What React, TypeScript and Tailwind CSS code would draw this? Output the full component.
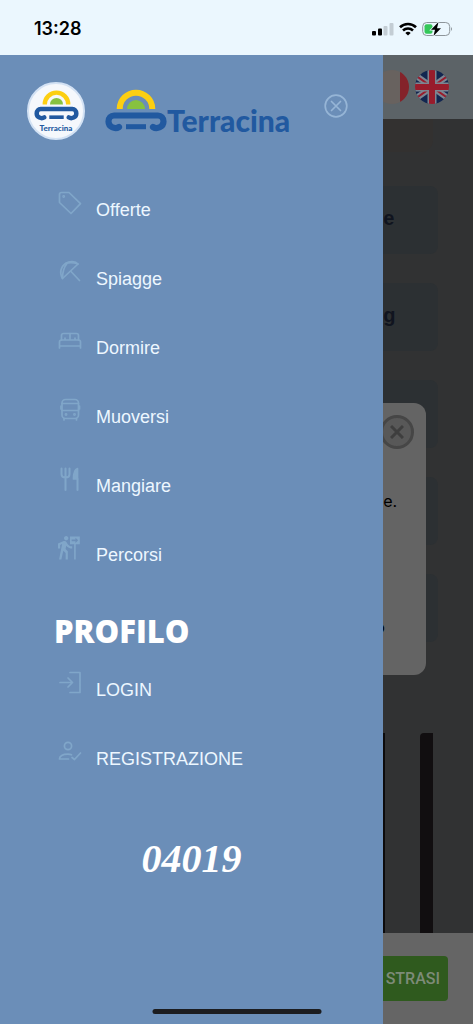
import type { ReactNode } from 'react';
import { MdFollowTheSigns } from 'react-icons/md';

const menu = [
  { label: 'Offerte', icon: <TagIcon /> },
  { label: 'Spiagge', icon: <BeachIcon /> },
  { label: 'Dormire', icon: <BedIcon /> },
  { label: 'Muoversi', icon: <BusIcon /> },
  { label: 'Mangiare', icon: <CutleryIcon /> },
  { label: 'Percorsi', icon: <MdFollowTheSigns viewBox="3 1.5 20 22" className="size-6" /> },
];

const profile = [
  { label: 'LOGIN', icon: <LoginIcon /> },
  { label: 'REGISTRAZIONE', icon: <UserCheckIcon /> },
];

const cards = ['e', 'g', '', '', ''];

function LineIcon({ children }: { children: ReactNode }) {
  return (
    <svg
      viewBox="0 0 24 24"
      className="size-6"
      fill="none"
      stroke="currentColor"
      strokeWidth="1.7"
      strokeLinecap="round"
      strokeLinejoin="round"
    >
      {children}
    </svg>
  );
}

function TagIcon() {
  return (
    <LineIcon>
      <path d="M1.5 3.5Q1.5 1.5 3.5 1.5H11L22.5 12.7 13 22.5 1.5 11.5Z" />
      <circle cx="5.7" cy="5.5" r="0.6" />
    </LineIcon>
  );
}

function BeachIcon() {
  return (
    <LineIcon>
      <path d="M4.500 18.500C1 13 3 6.500 7.500 3.500 12 .5 17.500 1.200 20 4Z" />
      <path d="M4.500 18.500C4.500 12 6.500 6.500 9 3.500M20 4C15.500 2.500 11 2.500 7.500 3.500M13 11.500 21.500 20.500" />
    </LineIcon>
  );
}

function BedIcon() {
  return (
    <LineIcon>
      <path d="M3.500 11V6.500Q3.500 4.500 5.500 4.500H18.500Q20.500 4.500 20.500 6.500V11" />
      <path d="M1.500 19V13Q1.500 11 3.500 11H20.500Q22.500 11 22.500 13V19M1.500 17H22.500M12 4.500V9.500M7 10V9M17 10V9" />
    </LineIcon>
  );
}

function BusIcon() {
  return (
    <LineIcon>
      <rect x="4" y="1.500" width="16.500" height="19" rx="3.500" />
      <path d="M4 5.500H20.500M4 12.500H20.500M6 20.500V22M18.500 20.500V22M3 8V11M21.500 8V11" />
      <circle cx="8" cy="16.500" r="0.600" />
      <circle cx="16.500" cy="16.500" r="0.600" />
    </LineIcon>
  );
}

function CutleryIcon() {
  return (
    <LineIcon>
      <path d="M3.500 1.500V7Q3.500 10.500 7.500 10.500 11.500 10.500 11.500 7V1.500M7.500 1.500V23" strokeWidth="2" />
      <path d="M19.500 1.500C16.500 2.500 15.500 5 15.500 12H19.500Z" fill="currentColor" />
      <path d="M19.500 12V23" strokeWidth="2" />
    </LineIcon>
  );
}

function LoginIcon() {
  return (
    <LineIcon>
      <path d="M12 1.500H22V21.500H12M2 11.500H14.500M10 7 14.500 11.500 10 16" />
    </LineIcon>
  );
}

function UserCheckIcon() {
  return (
    <LineIcon>
      <circle cx="10" cy="6" r="3.600" />
      <path d="M10.500 19H1.500C1.500 16 4.500 14.200 10 14.200 11.500 14.200 12.500 14.400 13.500 14.800M14 17.500 16.500 19.500 22.500 13" />
    </LineIcon>
  );
}

function Mark({ className }: { className: string }) {
  return (
    <svg viewBox="0 0 62 43" className={className} fill="none">
      <path d="M14.700 20A16.300 16.300 0 0 1 47.300 20" stroke="#fccf12" strokeWidth="6" />
      <path d="M22 20A9 9 0 0 1 40 20Z" fill="#87c23f" />
      <g stroke="#2159a0" strokeLinecap="round">
        <path
          d="M14 38C10 40.500 3.500 38 3.500 32.500 3.500 29 6 26.500 9 26.500H53C56 26.500 58.500 29 58.500 32.500 58.500 38 52 40.500 48 38"
          strokeWidth="6.200"
        />
        <path d="M21 37.700H41" strokeWidth="5" strokeLinecap="butt" />
      </g>
    </svg>
  );
}

function StatusBar() {
  return (
    <header className="flex h-[55px] items-center justify-between bg-[#ebf7fe] pt-[2px] pr-5 pl-[34px] text-black">
      <time className="font-[Inter,sans-serif] text-lg font-semibold">13:28</time>
      <div className="flex items-center gap-[5px]">
        <svg viewBox="0 0 22 14" className="h-[14px] w-[22px]">
          <rect x="0" y="9" width="4" height="4.500" rx="1" />
          <rect x="6" y="6.500" width="4" height="7" rx="1" />
          <g fill="#c3cdd4">
            <rect x="11.500" y="4" width="4" height="9.500" rx="1" />
            <rect x="17.500" y="1" width="4" height="12.500" rx="1" />
          </g>
        </svg>
        <svg viewBox="0 0 18 14" className="h-[14px] w-[18px]" fill="none" stroke="#000" strokeWidth="2.600">
          <path d="M1 5.200A11.500 11.500 0 0 1 17 5.200M4 8.500A7.300 7.300 0 0 1 14 8.500" />
          <path d="M9 13.500 6.300 10.900A4 4 0 0 1 11.700 10.900Z" fill="#000" stroke="none" />
        </svg>
        <svg viewBox="0 0 31 16" className="h-4 w-[31px]">
          <rect x="0.700" y="1.500" width="27" height="13" rx="4" fill="none" stroke="#8d959a" />
          <path d="M29 6Q31 8 29 10Z" fill="#8d959a" />
          <rect x="2.500" y="3.300" width="8" height="9.400" rx="2" fill="#34c759" />
          <path d="M16.500 1 9 8.800H13L11.500 15 19 7.200H15Z" stroke="#ebf7fe" strokeWidth="1.500" paintOrder="stroke" />
        </svg>
      </div>
    </header>
  );
}

function MenuItem({ label, icon }: { label: string; icon: ReactNode }) {
  return (
    <li className="h-[69px]">
      <a href="#" className="flex gap-[14px]">
        <span className="text-[#80a6c9]">{icon}</span>
        <span className="mt-[7px] text-lg leading-6 text-[#edf7ff]">{label}</span>
      </a>
    </li>
  );
}

function Drawer() {
  return (
    <nav className="flex w-[81%] shrink-0 flex-col bg-[#6b8eb8]">
      <div className="flex items-start pt-[27px] pr-[35px] pl-[27px]">
        <div className="flex size-[58px] flex-col items-center rounded-full border-2 border-[#d3e2f4] bg-[#f5f8fc] pt-[6px]">
          <Mark className="h-[31px] w-[45px]" />
          <span className="mt-[2px] font-[Lato,sans-serif] text-[8px] leading-[11px] font-black text-[#2159a0]">Terracina</span>
        </div>
        <div className="mt-[7px] ml-5 flex items-end">
          <Mark className="h-[43px] w-[62px]" />
          <span className="font-[Lato,sans-serif] text-[30px] leading-6 font-black text-[#2159a0]">Terracina</span>
        </div>
        <button aria-label="Chiudi" className="mt-3 ml-auto text-[#96b5d6]">
          <LineIcon>
            <circle cx="12" cy="12" r="10.800" />
            <path d="M7.500 7.500 16.500 16.500M16.500 7.500 7.500 16.500" />
          </LineIcon>
        </button>
      </div>

      <div className="mt-[51px] px-[58px]">
        <ul>
          {menu.map((item) => (
            <MenuItem key={item.label} {...item} />
          ))}
        </ul>
        <h2 className="-ml-1 h-[66px] pt-[10px] font-['Open_Sans',sans-serif] text-[31px] leading-8 font-extrabold text-white">
          PROFILO
        </h2>
        <ul>
          {profile.map((item) => (
            <MenuItem key={item.label} {...item} />
          ))}
        </ul>
      </div>

      <a
        href="#"
        className="mt-[26px] self-center font-['Liberation_Serif',serif] text-[40px] leading-12 font-bold text-white italic"
      >
        04019
      </a>
    </nav>
  );
}

function Flags() {
  return (
    <div className="flex h-16 shrink-0 items-center justify-end gap-[6px] bg-[#5c6367] pr-6">
      <svg viewBox="0 0 34 34" className="size-[34px] shrink-0 rounded-full">
        <rect width="34" height="34" fill="#68625f" />
        <rect width="8" height="34" fill="#1b2b4d" />
        <rect x="25" width="9" height="34" fill="#84232a" />
      </svg>
      <svg viewBox="0 0 34 34" className="size-[34px] shrink-0 rounded-full">
        <rect width="34" height="34" fill="#122650" />
        <path d="M0 5 34 29M34 5 0 29" stroke="#7d8591" strokeWidth="6" />
        <path d="M0 5 34 29M34 5 0 29" stroke="#981c2c" strokeWidth="2" />
        <path d="M17 0V34M0 17H34" stroke="#7d8591" strokeWidth="9" />
        <path d="M17 0V34M0 17H34" stroke="#981c2c" strokeWidth="6" />
      </svg>
    </div>
  );
}

function Dialog() {
  return (
    <div className="absolute top-[348px] right-[47px] left-0 h-[272px] rounded-r-xl bg-[#646464] text-black">
      <div className="flex justify-end pt-3 pr-3">
        <button
          aria-label="Chiudi"
          className="flex size-[34px] shrink-0 items-center justify-center rounded-full border-[3px] border-[#464646] bg-[#585858] text-[#3e3e3e]"
        >
          <svg viewBox="0 0 14 14" className="size-[14px]" stroke="currentColor" strokeWidth="3">
            <path d="M1 1 13 13M13 1 1 13" />
          </svg>
        </button>
      </div>
      <p className="mt-11 font-[Inter,sans-serif] text-base leading-4">e.</p>
      <p className="mt-[110px] -ml-2 font-[Inter,sans-serif] text-base leading-4">o</p>
    </div>
  );
}

function Page() {
  return (
    <main className="relative flex min-w-0 flex-1 flex-col overflow-hidden bg-[#313233]">
      <Flags />
      <div className="mr-10 h-[33px] rounded-br-xl bg-[#333130]" />
      <div className="mt-[34px] mr-[35px] flex flex-col gap-[29px]">
        {cards.map((text, i) => (
          <div
            key={i}
            className="flex h-[68px] items-center rounded-r-lg bg-[#2c3033] pb-1 text-xl font-bold text-[#10141f]"
          >
            {text}
          </div>
        ))}
      </div>
      <Dialog />
      <div className="mt-[91px] mr-10 flex flex-1 justify-between">
        <div className="w-[2px] bg-[#0c0b0c]" />
        <div className="w-[13px] rounded-tl-sm bg-[#110e10]" />
      </div>
      <footer className="h-[91px] shrink-0 bg-[#656565] pt-[23px] pr-[25px]">
        <button className="flex h-[45px] w-full items-center justify-end rounded-r bg-[#2f5a1e] pr-2 font-[Roboto,sans-serif] text-base font-medium text-[#7d8b78]">
          STRASI
        </button>
      </footer>
    </main>
  );
}

export default function App() {
  return (
    <div className="relative flex min-h-screen flex-col font-['Liberation_Sans',sans-serif]">
      <StatusBar />
      <div className="flex flex-1">
        <Drawer />
        <Page />
      </div>
      <div className="absolute bottom-[10px] left-1/2 h-[5px] w-[169px] -translate-x-1/2 rounded-full bg-[#1c1d20]" />
    </div>
  );
}
